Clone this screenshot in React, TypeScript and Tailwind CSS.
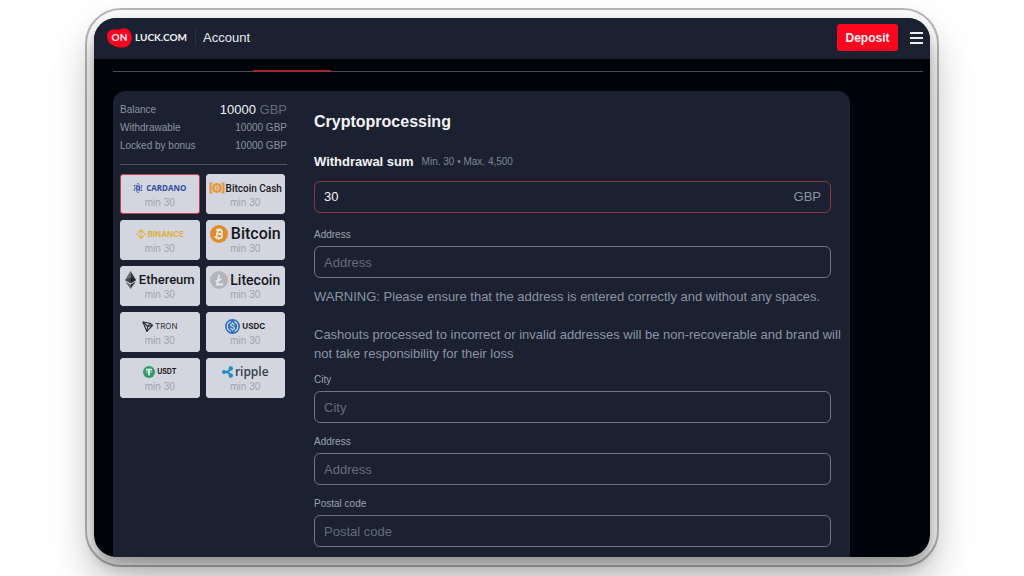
import React from "react";

type Method = {
  id: string;
  name: string;
  textClass: string;
  icon: React.ReactNode;
  selected?: boolean;
};

const CardanoIcon = () => (
  <svg viewBox="0 0 20 20" className="size-[10px] shrink-0" fill="#3450a4">
    {[0, 60, 120, 180, 240, 300].map((a) => (
      <g key={a} transform={`rotate(${a} 10 10)`}>
        <circle cx="10" cy="6.5" r="1.9" />
        <circle cx="12.8" cy="4.2" r="1.3" />
        <circle cx="10" cy="1.6" r="1.5" />
      </g>
    ))}
  </svg>
);

const BitcoinCashIcon = () => (
  <svg viewBox="0 0 32 24" className="h-3 w-4 shrink-0" fill="none" stroke="#e8963a">
    <path d="M7 3H3v18h4M25 3h4v18h-4" strokeWidth="4" />
    <circle cx="16" cy="12" r="7.5" strokeWidth="5" />
    <path d="M14 9h3a1.5 1.5 0 0 1 0 3h-3 4a1.5 1.5 0 0 1 0 3h-4z" strokeWidth="1.2" />
  </svg>
);

const BinanceIcon = () => (
  <svg viewBox="0 0 24 24" className="size-[10px] shrink-0" fill="#dfb03c">
    <path d="M12 0l7.2 7.2-2.7 2.7L12 5.4 7.5 9.9 4.8 7.2zM2.7 9.3L5.4 12l-2.7 2.7L0 12zM21.3 9.3L24 12l-2.7 2.7-2.7-2.7zM12 9.3l2.7 2.7-2.7 2.7L9.3 12zM7.5 14.1l4.5 4.5 4.5-4.5 2.7 2.7L12 24l-7.2-7.2z" />
  </svg>
);

const BitcoinIcon = () => (
  <svg viewBox="0 0 36 36" className="size-[18px] shrink-0">
    <circle cx="18" cy="18" r="18" fill="#e08b2c" />
    <g transform="rotate(13 18 18)" fill="none" stroke="#f4efe9" strokeWidth="3.2">
      <path d="M10.5 10.5H20a3.6 3.6 0 0 1 0 7.2h-6 7a4 4 0 0 1 0 8H10.5M14 10.5v15" />
      <path d="M16 6.5v4M20 6.5v4M16 25.5v4M20 25.5v4" strokeWidth="2.2" />
    </g>
  </svg>
);

const EthereumIcon = () => (
  <svg viewBox="0 0 22 36" className="h-[18px] w-[11px] shrink-0">
    <path d="M11 0L0 18l11 6.5z" fill="#6c6d76" />
    <path d="M11 0l11 18-11 6.5z" fill="#34353f" />
    <path d="M11 13L0 18l11 6.5z" fill="#44454f" />
    <path d="M11 13l11 5-11 6.5z" fill="#1d1e27" />
    <path d="M0 20.5L11 36v-9z" fill="#6c6d76" />
    <path d="M22 20.5L11 36v-9z" fill="#34353f" />
  </svg>
);

const LitecoinIcon = () => (
  <svg viewBox="0 0 36 36" className="size-[18px] shrink-0">
    <circle cx="18" cy="18" r="18" fill="#b4b5ba" />
    <path d="M18.5 7.5L14 27h12M11 21l12-5" fill="none" stroke="#e6e6ec" strokeWidth="3.6" />
  </svg>
);

const TronIcon = () => (
  <svg viewBox="0 0 24 24" className="size-[11px] shrink-0" fill="none" stroke="#26272e" strokeWidth="2.4" strokeLinejoin="round">
    <path d="M2 2l15.5 3L23 9.5 10.5 22.5z" />
    <path d="M2 2l10.5 10L10.5 22.5M12.5 12L17.5 5M12.5 12L23 9.5" />
  </svg>
);

const UsdcIcon = () => (
  <svg viewBox="0 0 32 32" className="size-[15px] shrink-0" fill="none">
    <circle cx="16" cy="16" r="16" fill="#2d71b9" />
    <path d="M12.5 5.5a11 11 0 0 0 0 21M19.5 5.5a11 11 0 0 1 0 21" stroke="#dfe5f0" strokeWidth="2.2" />
    <path d="M20 13.2c0-2-1.6-3.2-4-3.2s-4 1.1-4 2.9c0 4.2 8.2 2 8.2 6.2 0 1.9-1.7 3-4.2 3s-4.2-1.2-4.2-3.2M16 7.5V10M16 22v2.5" stroke="#dfe5f0" strokeWidth="2.2" />
  </svg>
);

const UsdtIcon = () => (
  <svg viewBox="0 0 24 24" className="size-3 shrink-0">
    <circle cx="12" cy="12" r="12" fill="#2f9b69" />
    <path d="M6 5.5h12v3.2h-4.3V19h-3.4V8.7H6z" fill="#e4efe9" />
    <ellipse cx="12" cy="11.5" rx="6.5" ry="1.6" fill="none" stroke="#e4efe9" strokeWidth="1" />
  </svg>
);

const RippleIcon = () => (
  <svg viewBox="0 0 24 24" className="size-3 shrink-0" fill="#1a8fc0">
    <path d="M5 12h7l5-6M12 12l5 6" fill="none" stroke="#1a8fc0" strokeWidth="3" />
    <circle cx="4" cy="12" r="4" />
    <circle cx="11.5" cy="12" r="3.5" />
    <circle cx="17.5" cy="5" r="4.5" />
    <circle cx="17.5" cy="19" r="4.5" />
  </svg>
);

const METHODS: Method[] = [
  { id: "ada", name: "CARDANO", textClass: "gap-[3px] font-['Open_Sans'] text-[8px] font-bold text-[#2f4ba0]", icon: <CardanoIcon />, selected: true },
  { id: "bch", name: "Bitcoin Cash", textClass: "gap-px font-[Roboto] text-[10px] font-medium text-[#16171c]", icon: <BitcoinCashIcon /> },
  { id: "bnb", name: "BINANCE", textClass: "gap-[2px] font-[Inter] text-[8px] font-bold text-[#dfb03c]", icon: <BinanceIcon /> },
  { id: "btc", name: "Bitcoin", textClass: "gap-[3px] font-[Roboto] text-[16px] font-medium text-[#16171c]", icon: <BitcoinIcon /> },
  { id: "eth", name: "Ethereum", textClass: "gap-[3px] font-[Roboto] text-[13px] font-medium text-[#16171c]", icon: <EthereumIcon /> },
  { id: "ltc", name: "Litecoin", textClass: "gap-[2px] font-[Roboto] text-[14px] font-medium text-[#16171c]", icon: <LitecoinIcon /> },
  { id: "trx", name: "TRON", textClass: "gap-[2px] font-[Inter] text-[8px] text-[#33343b]", icon: <TronIcon /> },
  { id: "usdc", name: "USDC", textClass: "gap-[2px] font-[Inter] text-[8px] font-bold text-[#1f2026]", icon: <UsdcIcon /> },
  { id: "usdt", name: "USDT", textClass: "gap-[2px] font-[Inter] text-[7px] font-bold text-[#1f2026]", icon: <UsdtIcon /> },
  { id: "xrp", name: "ripple", textClass: "gap-px font-['Open_Sans'] text-[12px] font-semibold text-[#33404c]", icon: <RippleIcon /> },
];

const Header = () => (
  <header className="flex h-[41px] items-center bg-[#1b2130] pr-[7px] pb-[2px] pl-[13px]">
    <a href="#home" className="flex items-center gap-[3px] font-[Lato] text-[10px] font-bold text-[#eef0f4]">
      <span className="relative flex h-5 w-[25px] items-center justify-center">
        <svg viewBox="0 0 50 40" className="absolute inset-0 size-full" fill="#fb0320">
          <path d="M12 3C18 2 20 5 25 3c6-3 15-4 20 3 6 8 6 18 1 25-4 7-12 9-20 8-7 0-10-3-15-5C3 31 0 24 0 15 0 8 5 4 12 3z" />
        </svg>
        <span className="relative">ON</span>
      </span>
      LUCK.COM
    </a>
    <div className="ml-2 h-4 w-px bg-[#2a3040]"></div>
    <h1 className="ml-[7px] text-[13px] text-[#e9ebf0]">Account</h1>
    <button className="ml-auto h-[27px] w-[61px] rounded-[3px] bg-[#fc0620] text-[12px] font-bold text-[#fff0f2]">Deposit</button>
    <button aria-label="Menu" className="ml-3 flex h-5 w-[13px] flex-col justify-center gap-[3px]">
      <span className="h-[2px] w-full bg-[#eceef2]"></span>
      <span className="h-[2px] w-full bg-[#eceef2]"></span>
      <span className="h-[2px] w-full bg-[#eceef2]"></span>
    </button>
  </header>
);

const Balances = () => (
  <dl className="flex flex-col border-b border-[#4c5361] pb-[9px] text-[10px] leading-[18px] text-[#8b93a3]">
    <div className="flex items-center justify-between">
      <dt>Balance</dt>
      <dd className="text-[13px] text-[#656c7b]">
        <span className="text-[#f1f3f6]">10000</span> GBP
      </dd>
    </div>
    <div className="flex items-center justify-between">
      <dt>Withdrawable</dt>
      <dd>10000 GBP</dd>
    </div>
    <div className="flex items-center justify-between">
      <dt>Locked by bonus</dt>
      <dd>10000 GBP</dd>
    </div>
  </dl>
);

const MethodTile = ({ method }: { method: Method }) => (
  <button
    aria-pressed={!!method.selected}
    className={`flex h-10 flex-col items-center justify-center rounded-[3px] border bg-[#d4d6df] whitespace-nowrap ${
      method.selected ? "border-[#c93a46]" : "border-[#d4d6df]"
    }`}
  >
    <span className={`flex h-[18px] items-center ${method.textClass}`}>
      {method.icon}
      {method.name}
    </span>
    <span className="text-[10px] leading-3 text-[#a0a3ad]">min 30</span>
  </button>
);

const Field = ({ id, label }: { id: string; label: string }) => (
  <div className="flex flex-col gap-1">
    <label htmlFor={id} className="text-[10px] leading-[14px] text-[#99a1b0]">
      {label}
    </label>
    <input
      id={id}
      type="text"
      placeholder={label}
      className="h-8 w-full rounded-[6px] border border-[#6d7482] bg-transparent px-[9px] text-[13px] text-[#e9ebf0] placeholder:text-[#656c7a]"
    />
  </div>
);

const WithdrawForm = () => (
  <form className="min-w-0 flex-1 pt-[21px] pr-[19px] pb-[10px]">
    <h2 className="text-[16px] leading-5 font-bold text-[#f3f4f7]">Cryptoprocessing</h2>
    <div className="mt-5 flex items-center gap-2 leading-5">
      <label htmlFor="sum" className="text-[13px] font-bold text-[#f3f4f7]">
        Withdrawal sum
      </label>
      <span className="text-[10px] text-[#7f8797]">Min. 30 • Max. 4,500</span>
    </div>
    <div className="mt-[9px] flex h-8 items-center rounded-[6px] border border-[#8f3844] px-[9px] text-[13px]">
      <input id="sum" type="text" defaultValue="30" className="min-w-0 flex-1 bg-transparent text-[#f1f3f6] outline-none" />
      <span className="text-[#8b93a3]">GBP</span>
    </div>
    <div className="mt-[15px]">
      <Field id="wallet" label="Address" />
    </div>
    <div className="-mr-4 mt-[9px] mb-[10px] flex flex-col gap-[19px] text-[13px] leading-[19px] text-[#8b94a5]">
      <p>WARNING: Please ensure that the address is entered correctly and without any spaces.</p>
      <p>Cashouts processed to incorrect or invalid addresses will be non-recoverable and brand will not take responsibility for their loss</p>
    </div>
    <div className="flex flex-col gap-3">
      <Field id="city" label="City" />
      <Field id="street" label="Address" />
      <Field id="postal" label="Postal code" />
    </div>
  </form>
);

const App: React.FC = () => {
  return (
    <div className="overflow-hidden bg-white px-[85px] pt-2 pb-[10px] font-['Liberation_Sans',Arial,sans-serif]">
      <div className="rounded-[36px] border-2 border-[#b9b9b9] px-[7px] py-2">
        <div className="rounded-[22px] shadow-[0_8px_12px_rgba(0,0,0,0.2),0_20px_44px_rgba(0,0,0,0.32)]">
          <div className="overflow-hidden rounded-[22px] bg-[#01030b]">
            <Header />
            <div className="pt-[11px] pr-[7px] pl-[19px]">
              <div className="h-[2px] border-b border-[#4a4d55]">
                <div className="ml-[140px] h-[2px] w-[78px] bg-[#a32631]"></div>
              </div>
              <main className="mt-[19px] mr-[73px] flex rounded-t-[12px] bg-[#1b2130]">
                <aside className="w-[201px] shrink-0 pt-[10px] pr-[27px] pl-[7px]">
                  <Balances />
                  <div className="mt-[9px] mr-[2px] grid grid-cols-2 gap-[6px]">
                    {METHODS.map((method) => (
                      <MethodTile key={method.id} method={method} />
                    ))}
                  </div>
                </aside>
                <WithdrawForm />
              </main>
            </div>
          </div>
        </div>
      </div>
    </div>
  );
};

export default App;
